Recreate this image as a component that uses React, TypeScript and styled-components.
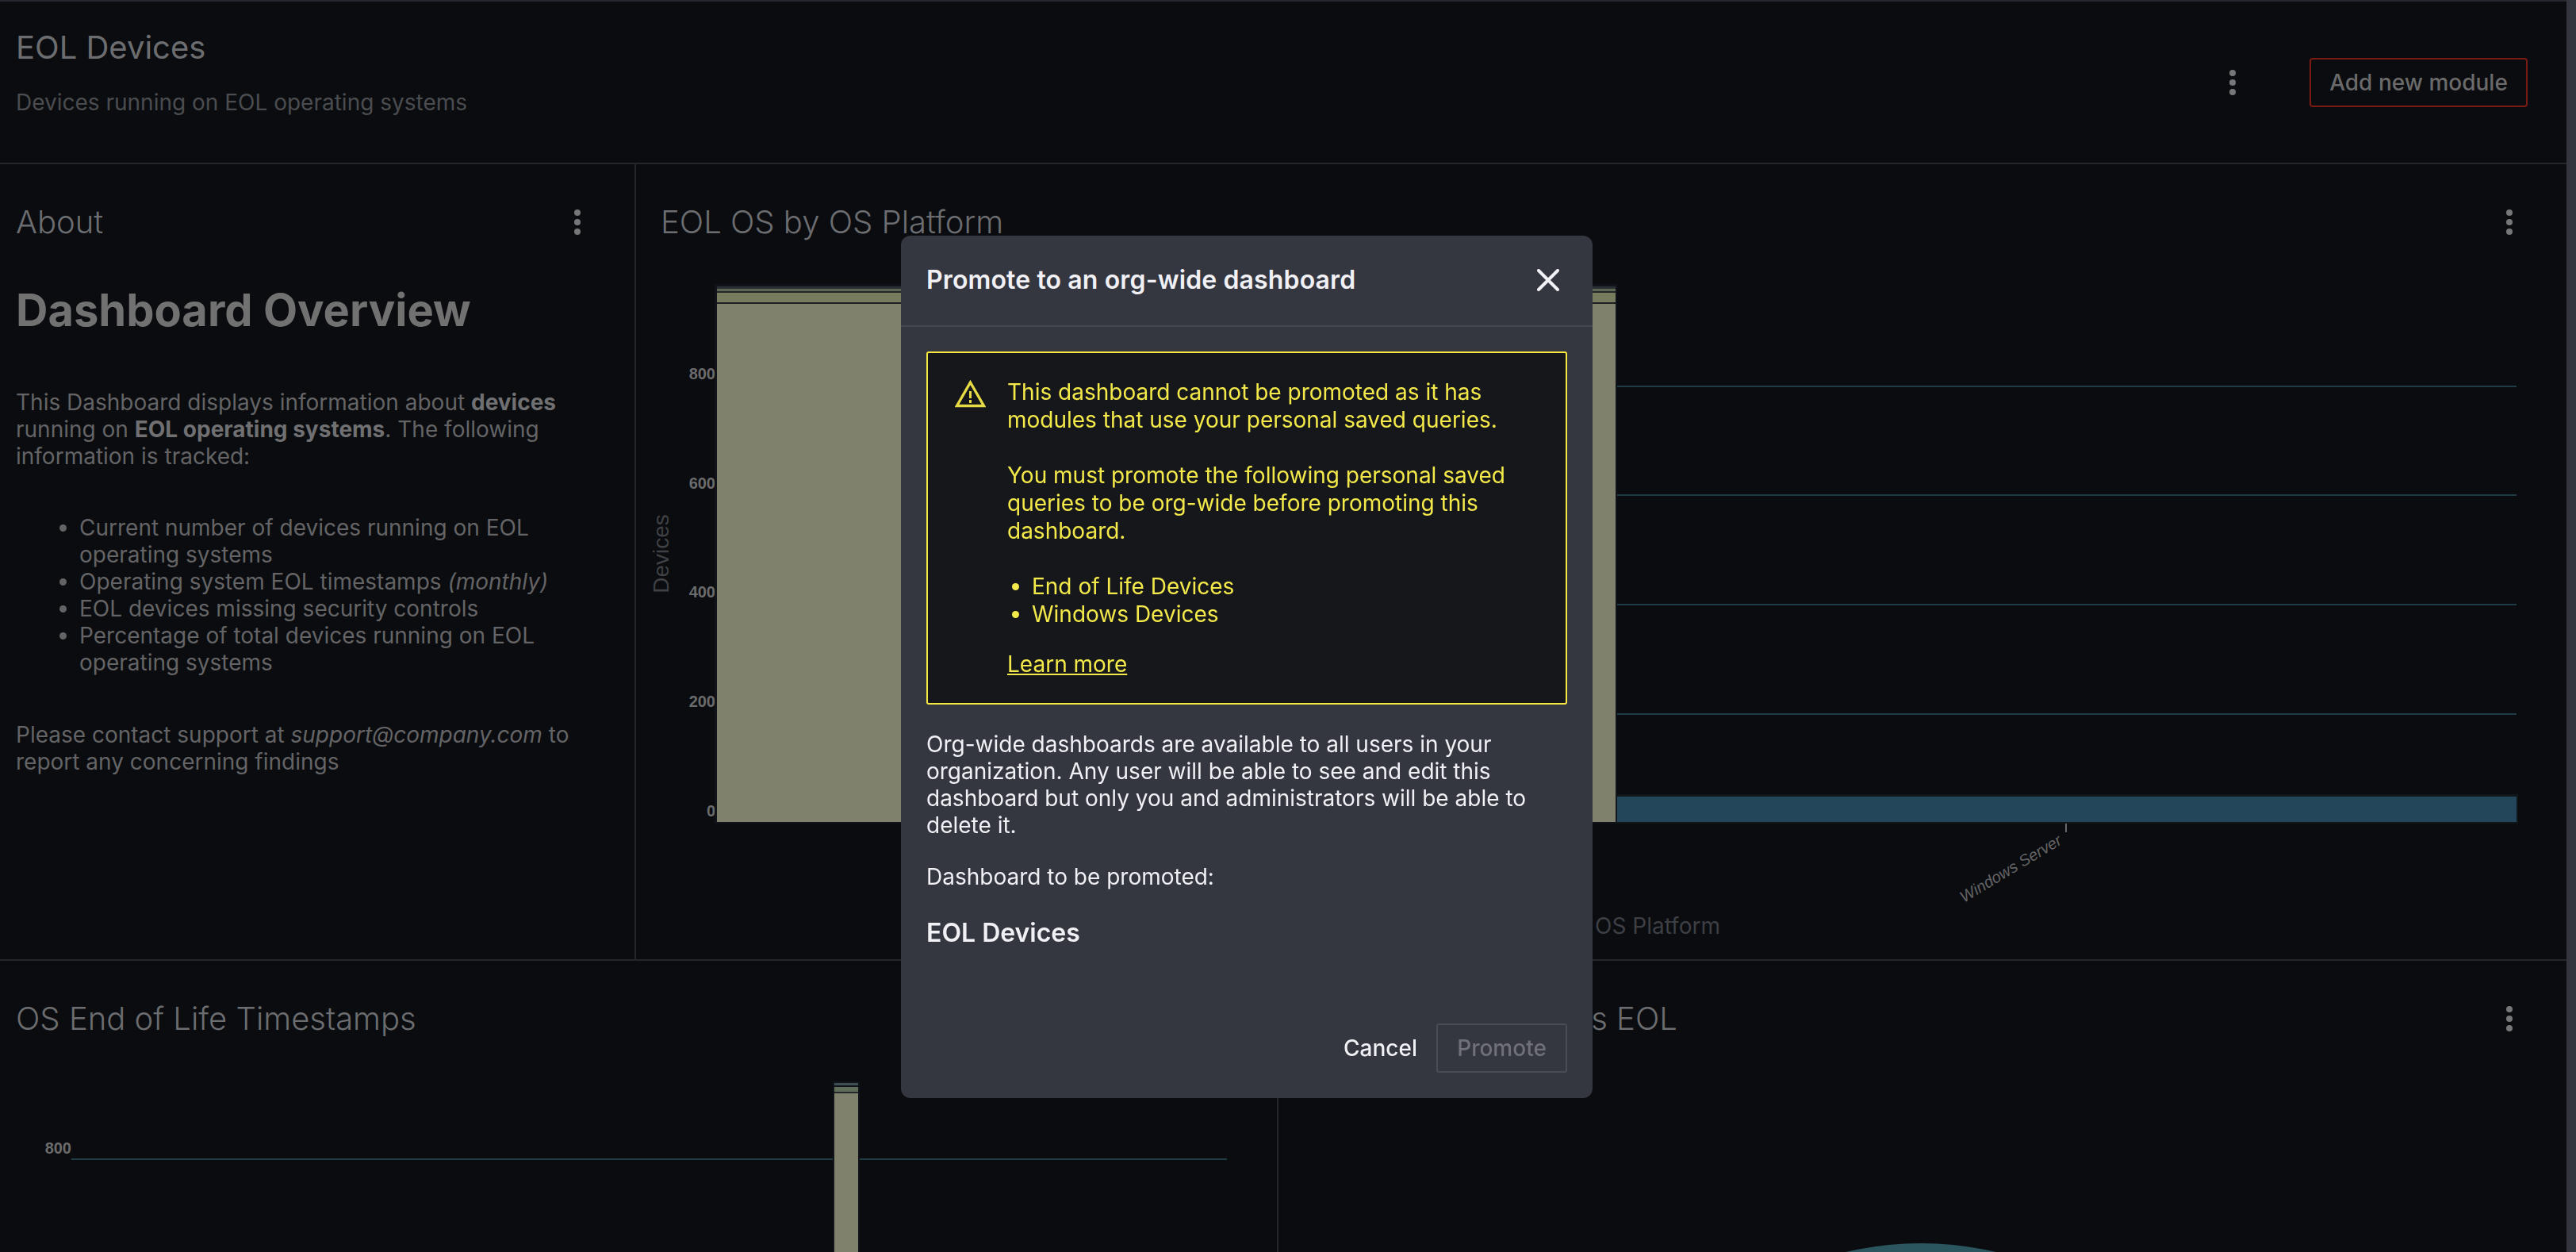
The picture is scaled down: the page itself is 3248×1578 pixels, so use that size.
import React from "react";
import styled, { createGlobalStyle } from "styled-components";

const Global = createGlobalStyle`
  html, body { margin: 0; padding: 0; background: #0a0c0f; overflow: hidden; }
  body { font-family: "Inter", "Liberation Sans", sans-serif; color: #6e6e6e; }
  * { box-sizing: border-box; }
`;

const Page = styled.div`
  width: 3248px;
  height: 1578px;
  display: flex;
  overflow: hidden;
  background: #0a0c0f;
`;
const Content = styled.main`
  width: 3236px;
  flex: none;
  display: flex;
  flex-direction: column;
  border-top: 2px solid #24272e;
`;
const Scrollbar = styled.div`
  width: 12px;
  flex: none;
  background: #33363f;
`;
const Header = styled.header`
  height: 205px;
  flex: none;
  display: flex;
  align-items: center;
  justify-content: space-between;
  padding: 0 49px 0 20px;
  border-bottom: 2px solid #24262c;
`;
const HeaderText = styled.div`
  display: flex;
  flex-direction: column;
  gap: 28px;
  margin-bottom: 25px;
`;
const PageTitle = styled.h1`
  margin: 0;
  font-size: 40px;
  line-height: 48px;
  font-weight: 400;
  color: #6c6d70;
`;
const Subtitle = styled.div`
  font-size: 28px;
  line-height: 34px;
  color: #4b4c50;
`;
const HeaderActions = styled.div`
  display: flex;
  align-items: center;
  gap: 93px;
`;
const OutlineButton = styled.button`
  width: 275px;
  height: 62px;
  background: transparent;
  border: 2px solid #7a1a13;
  border-radius: 4px;
  font: 500 28px "Inter", sans-serif;
  color: #6a6a6a;
  padding: 0;
`;
const Dots = styled.svg`
  width: 8px;
  height: 32px;
  flex: none;
  display: block;
  fill: #767779;
`;
const Kebab = () => (
  <Dots viewBox="0 0 8 32">
    <circle cx="4" cy="4" r="4" />
    <circle cx="4" cy="16" r="4" />
    <circle cx="4" cy="28" r="4" />
  </Dots>
);
const Row = styled.section<{ $height: number }>`
  height: ${(p) => p.$height}px;
  flex: none;
  display: flex;
  border-bottom: 2px solid #24262c;
`;
const LastRow = styled.section`
  flex: 1;
  min-height: 0;
  display: flex;
`;
const Panel = styled.article<{ $width?: number }>`
  ${(p) => (p.$width ? `width: ${p.$width}px; flex: none; border-right: 2px solid #24262c;` : "flex: 1; min-width: 0;")}
  display: flex;
  flex-direction: column;
  overflow: hidden;
`;
const PanelHead = styled.div<{ $top: number }>`
  flex: none;
  display: flex;
  align-items: center;
  justify-content: space-between;
  padding: ${(p) => p.$top}px 68px 0 20px;
`;
const PanelHeadChart = styled(PanelHead)`
  padding-left: 31px;
`;
const PanelTitle = styled.h2`
  margin: 0;
  font-size: 40px;
  line-height: 50px;
  font-weight: 300;
  color: #6c6d70;
  white-space: nowrap;
`;
const About = styled.div`
  padding: 52px 20px 0;
  font-size: 28px;
  line-height: 34px;
  color: #646466;
  b { font-weight: 700; color: #707072; }
`;
const AboutHeading = styled.h1`
  margin: 0 0 65px;
  font-size: 56px;
  line-height: 68px;
  font-weight: 700;
  color: #717172;
`;
const AboutText = styled.p`
  margin: 0;
`;
const AboutList = styled.ul`
  margin: 56px 0 57px;
  padding: 0 0 0 80px;
`;
const ChartSvg = styled.svg<{ $mt: number }>`
  display: block;
  flex: none;
  margin-top: ${(p) => p.$mt}px;
  text { font-family: "Liberation Sans", Arial, sans-serif; }
`;
const YLabel = styled.text`
  font-size: 20px;
  font-weight: 700;
  fill: #6b6b6c;
  text-anchor: end;
`;
const AxisTitle = styled.text`
  font-size: 28px;
  fill: #3f4146;
`;
const XTitle = styled.text`
  && { font-family: "Inter", sans-serif; }
  font-size: 28px;
  fill: #3d3f45;
`;
const XLabel = styled.text`
  font-size: 20px;
  font-style: italic;
  fill: #636365;
`;

const Modal = styled.div`
  position: fixed;
  left: 1136px;
  top: 297px;
  width: 872px;
  height: 1087px;
  display: flex;
  flex-direction: column;
  background: #343640;
  border-radius: 12px;
  color: #f0f0f5;
`;
const ModalHeader = styled.div`
  height: 115px;
  flex: none;
  display: flex;
  align-items: center;
  justify-content: space-between;
  padding: 0 42px 1px 32px;
  border-bottom: 2px solid #43454f;
`;
const ModalTitle = styled.h2`
  margin: 0;
  font-size: 32px;
  line-height: 40px;
  font-weight: 600;
  letter-spacing: 0.13px;
`;
const CloseIcon = styled.svg`
  width: 28px;
  height: 28px;
  display: block;
  stroke: #f0f0f5;
  stroke-width: 4;
  stroke-linecap: round;
`;
const ModalBody = styled.div`
  flex: 1;
  padding: 31px 32px 0;
  font-size: 28px;
  line-height: 34px;
`;
const Alert = styled.div`
  height: 445px;
  display: flex;
  gap: 27px;
  padding: 32px 32px 0 34px;
  background: #15171b;
  border: 2px solid #f5e642;
  border-radius: 3px;
  color: #f4e94a;
  font-size: 28px;
  line-height: 35px;
`;
const AlertIcon = styled.svg`
  width: 39px;
  height: 35px;
  flex: none;
  margin-top: 2px;
  display: block;
`;
const AlertText = styled.div`
  flex: 1;
  min-width: 0;
`;
const AlertPara = styled.p`
  margin: 0 0 35px;
`;
const AlertList = styled.ul`
  margin: 0 0 28px;
  padding: 0 0 0 31px;
`;
const AlertLink = styled.a`
  color: inherit;
  text-decoration: underline;
`;
const BodyPara = styled.p`
  margin: 33px 0 31px;
`;
const BodyLabel = styled.p`
  margin: 0;
`;
const DashName = styled.div`
  margin-top: 34px;
  font-size: 32px;
  line-height: 40px;
  font-weight: 600;
`;
const ModalFooter = styled.div`
  flex: none;
  display: flex;
  justify-content: flex-end;
  align-items: center;
  gap: 24px;
  padding: 0 32px 32px;
`;
const TextButton = styled.button`
  background: none;
  border: 0;
  padding: 0;
  font: 500 28px "Inter", sans-serif;
  color: #f0f0f5;
`;
const DisabledButton = styled.button`
  width: 165px;
  height: 62px;
  background: transparent;
  border: 2px solid #4a4c55;
  border-radius: 3px;
  font: 500 28px "Inter", sans-serif;
  color: #6f7078;
  padding: 0;
`;

const yTicks = [
  { label: "800", line: 487, text: 471 },
  { label: "600", line: 624, text: 609 },
  { label: "400", line: 762, text: 746 },
  { label: "200", line: 900, text: 884 },
];

const BarChart = () => (
  <ChartSvg $mt={35} width={2434} height={867} viewBox="802 340 2434 867">
    {yTicks.map((t) => (
      <line key={t.label} x1={2039} x2={3173} y1={t.line} y2={t.line} stroke="#1d3c45" strokeWidth={2} />
    ))}
    {yTicks.map((t) => (
      <YLabel key={t.label} x={902} y={t.text + 7}>
        {t.label}
      </YLabel>
    ))}
    <YLabel x={902} y={1029}>0</YLabel>
    <AxisTitle transform="translate(843 698) rotate(-90)" textAnchor="middle">Devices</AxisTitle>
    <rect x={901} y={358} width={1138} height={680} fill="#10141a" />
    <rect x={904} y={361} width={1133} height={3} fill="#2a3034" />
    <rect x={904} y={364} width={1133} height={3} fill="#5d6852" />
    <rect x={904} y={367} width={1133} height={2} fill="#23272a" />
    <rect x={904} y={369} width={1133} height={12} fill="#787c5f" />
    <rect x={904} y={381} width={1133} height={2} fill="#1c1e20" />
    <rect x={904} y={383} width={1133} height={653} fill="#7f816c" />
    <rect x={2037} y={1001} width={1138} height={37} fill="#11161b" />
    <rect x={2039} y={1004} width={1134} height={32} fill="#24465a" />
    <line x1={2605} x2={2605} y1={1038} y2={1049} stroke="#66676a" strokeWidth={2} />
    <XLabel transform="translate(2601 1063) rotate(-31)" textAnchor="end">Windows Server</XLabel>
    <XTitle x={2011} y={1177}>OS Platform</XTitle>
  </ChartSvg>
);

const TimelineChart = () => (
  <ChartSvg $mt={54} width={1610} height={215} viewBox="0 1363 1610 215">
    <line x1={90} x2={1547} y1={1461} y2={1461} stroke="#1f3d44" strokeWidth={2} />
    <YLabel x={90} y={1454}>800</YLabel>
    <rect x={1050} y={1363} width={34} height={215} fill="#10141a" />
    <rect x={1052} y={1365} width={30} height={3} fill="#3c5054" />
    <rect x={1052} y={1370} width={30} height={6} fill="#5f6e58" />
    <rect x={1052} y={1376} width={30} height={2} fill="#23272a" />
    <rect x={1052} y={1378} width={30} height={200} fill="#7f816c" />
  </ChartSvg>
);

const PieChart = () => (
  <ChartSvg $mt={54} width={1624} height={215} viewBox="1612 1363 1624 215">
    <circle cx={2422} cy={1982} r={415} fill="#2b5660" />
  </ChartSvg>
);

export default function App() {
  return (
    <Page>
      <Global />
      <Content>
        <Header>
          <HeaderText>
            <PageTitle>EOL Devices</PageTitle>
            <Subtitle>Devices running on EOL operating systems</Subtitle>
          </HeaderText>
          <HeaderActions>
            <Kebab />
            <OutlineButton>Add new module</OutlineButton>
          </HeaderActions>
        </Header>
        <Row $height={1004}>
          <Panel $width={802}>
            <PanelHead $top={48}>
              <PanelTitle>About</PanelTitle>
              <Kebab />
            </PanelHead>
            <About>
              <AboutHeading>Dashboard Overview</AboutHeading>
              <AboutText>
                This Dashboard displays information about <b>devices</b> running on <b>EOL operating systems</b>. The
                following information is tracked:
              </AboutText>
              <AboutList>
                <li>Current number of devices running on EOL operating systems</li>
                <li>
                  Operating system EOL timestamps <em>(monthly)</em>
                </li>
                <li>EOL devices missing security controls</li>
                <li>Percentage of total devices running on EOL operating systems</li>
              </AboutList>
              <AboutText>
                Please contact support at <em>support@company.com</em> to report any concerning findings
              </AboutText>
            </About>
          </Panel>
          <Panel>
            <PanelHeadChart $top={48}>
              <PanelTitle>EOL OS by OS Platform</PanelTitle>
              <Kebab />
            </PanelHeadChart>
            <BarChart />
          </Panel>
        </Row>
        <LastRow>
          <Panel $width={1612}>
            <PanelHead $top={48}>
              <PanelTitle>OS End of Life Timestamps</PanelTitle>
              <Kebab />
            </PanelHead>
            <TimelineChart />
          </Panel>
          <Panel>
            <PanelHead $top={48}>
              <PanelTitle>Total Real Devices vs EOL</PanelTitle>
              <Kebab />
            </PanelHead>
            <PieChart />
          </Panel>
        </LastRow>
      </Content>
      <Scrollbar />
      <Modal role="dialog">
        <ModalHeader>
          <ModalTitle>Promote to an org-wide dashboard</ModalTitle>
          <CloseIcon viewBox="0 0 28 28">
            <path d="M2 2 L26 26 M26 2 L2 26" />
          </CloseIcon>
        </ModalHeader>
        <ModalBody>
          <Alert>
            <AlertIcon viewBox="0 0 39 35">
              <path d="M19.5 3 L36.5 32.5 H2.5 Z" fill="none" stroke="#e6da45" strokeWidth="3.4" />
              <rect x="18" y="14" width="3" height="9" fill="#e6da45" />
              <rect x="18" y="25" width="3" height="4" fill="#e6da45" />
            </AlertIcon>
            <AlertText>
              <AlertPara>This dashboard cannot be promoted as it has modules that use your personal saved queries.</AlertPara>
              <AlertPara>
                You must promote the following personal saved queries to be org-wide before promoting this dashboard.
              </AlertPara>
              <AlertList>
                <li>End of Life Devices</li>
                <li>Windows Devices</li>
              </AlertList>
              <AlertLink href="#">Learn more</AlertLink>
            </AlertText>
          </Alert>
          <BodyPara>
            Org-wide dashboards are available to all users in your organization. Any user will be able to see and edit
            this dashboard but only you and administrators will be able to delete it.
          </BodyPara>
          <BodyLabel>Dashboard to be promoted:</BodyLabel>
          <DashName>EOL Devices</DashName>
        </ModalBody>
        <ModalFooter>
          <TextButton>Cancel</TextButton>
          <DisabledButton disabled>Promote</DisabledButton>
        </ModalFooter>
      </Modal>
    </Page>
  );
}
